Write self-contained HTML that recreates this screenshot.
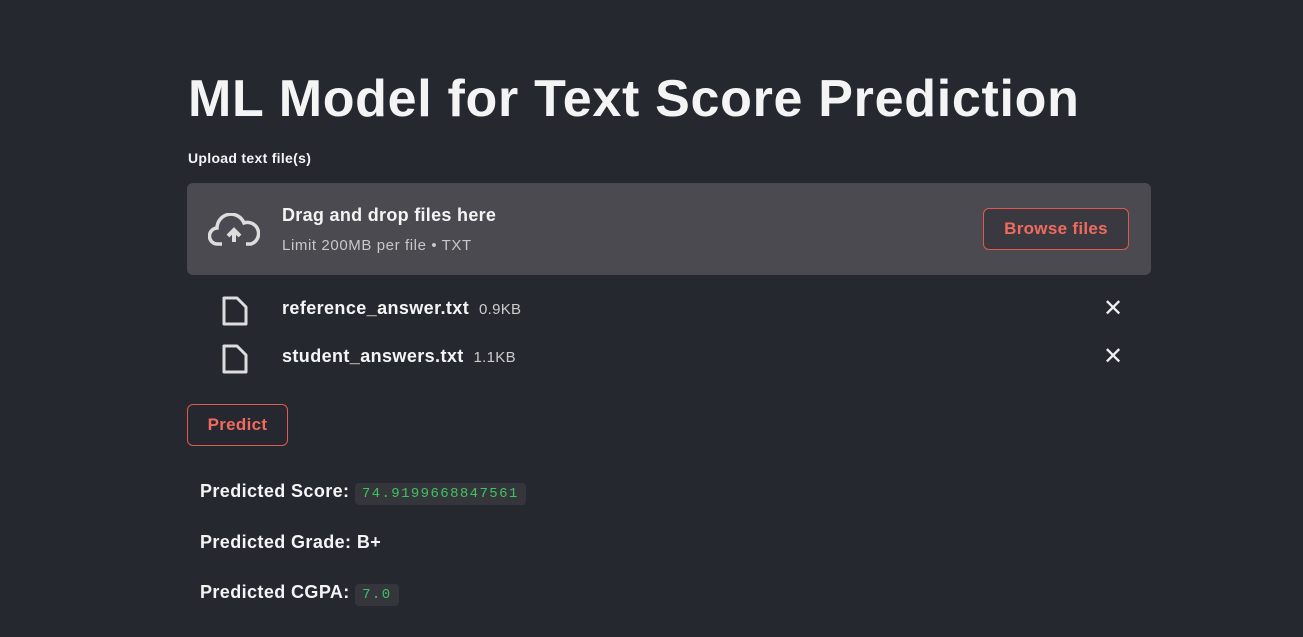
<!DOCTYPE html>
<html><head><style>
body{margin:0;width:1303px;height:637px;background:#26282f;font-family:"Liberation Sans",sans-serif;color:#f4f4f4;position:relative;overflow:hidden}
.a{position:absolute;white-space:nowrap}
h1{position:absolute;left:188px;top:69px;margin:0;font-size:52px;font-weight:bold;letter-spacing:0.7px}
.drop{position:absolute;left:187px;top:183px;width:964px;height:92px;background:#4b4a50;border-radius:6px}
.btn{position:absolute;border:1.5px solid #e0584f;border-radius:6px;color:#f06a60;font-size:17px;display:flex;align-items:center;justify-content:center;box-sizing:border-box;letter-spacing:0.3px}
.code{font-family:"Liberation Mono",monospace;color:#3fc35e;background:#34363c;border-radius:4px;font-size:14px;padding:3px 7px;letter-spacing:1.4px;font-weight:normal}
.b{font-weight:bold;font-size:18px;letter-spacing:0.4px}
.s{font-size:15px;font-weight:normal;color:#ccc;letter-spacing:0.3px}
</style></head><body>
<h1>ML Model for Text Score Prediction</h1>
<div class="a" style="left:188px;top:150px;font-size:14px;font-weight:bold;letter-spacing:0.3px">Upload text file(s)</div>
<div class="drop">
<svg style="position:absolute;left:21px;top:30px" width="52" height="34" viewBox="0 0 52 34"><path d="M14 31H10A8 8 0 0 1 9 15 14 14 0 0 1 36 10 10 10 0 0 1 43 31H38" fill="none" stroke="#ddd" stroke-width="3.5"/><path d="M26 29V18M20 23l6-6 6 6" fill="none" stroke="#ddd" stroke-width="4"/></svg>
<div class="a" style="left:95px;top:22px;font-size:18px;font-weight:bold;letter-spacing:0.3px">Drag and drop files here</div>
<div class="a" style="left:95px;top:54px;font-size:15px;color:#c8c8c8;letter-spacing:0.6px">Limit 200MB per file • TXT</div>
<div class="btn" style="left:796px;top:25px;width:146px;height:42px;font-weight:bold;background:#3a393f">Browse files</div>
</div>
<svg class="a" style="left:221px;top:295px" width="28" height="32" viewBox="0 0 28 32"><path d="M3 3H16L25 12V29H3Z" fill="none" stroke="#ddd" stroke-width="3" stroke-linejoin="round"/></svg>
<div class="a b" style="left:282px;top:298px">reference_answer.txt <span class="s">&nbsp;0.9KB</span></div>
<div class="a" style="left:1103px;top:294px;font-size:24px;color:#eee">✕</div>
<svg class="a" style="left:221px;top:343px" width="28" height="32" viewBox="0 0 28 32"><path d="M3 3H16L25 12V29H3Z" fill="none" stroke="#ddd" stroke-width="3" stroke-linejoin="round"/></svg>
<div class="a b" style="left:282px;top:346px">student_answers.txt <span class="s">&nbsp;1.1KB</span></div>
<div class="a" style="left:1103px;top:342px;font-size:24px;color:#eee">✕</div>
<div class="btn" style="left:187px;top:404px;width:101px;height:42px;font-weight:bold">Predict</div>
<div class="a b" style="left:200px;top:481px">Predicted Score: <span class="code">74.9199668847561</span></div>
<div class="a b" style="left:200px;top:532px">Predicted Grade: B+</div>
<div class="a b" style="left:200px;top:582px">Predicted CGPA: <span class="code">7.0</span></div>
</body></html>
